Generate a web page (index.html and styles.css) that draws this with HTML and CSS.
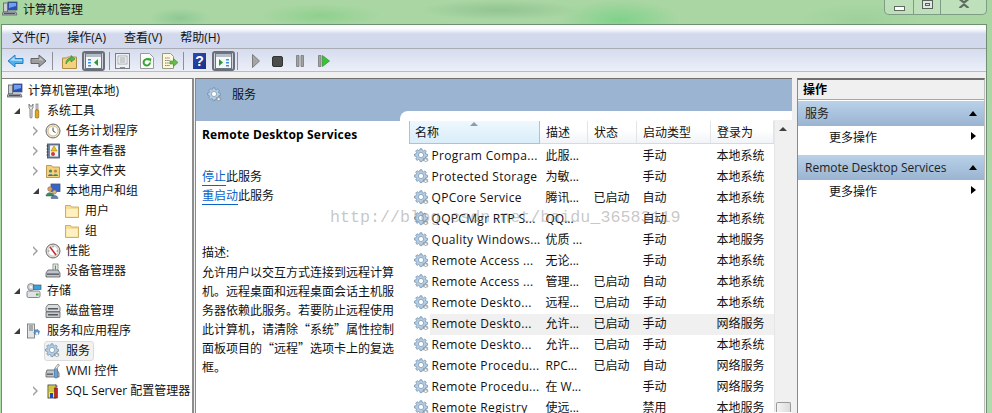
FILE: index.html
```html
<!DOCTYPE html>
<html lang="zh">
<head>
<meta charset="utf-8">
<title>计算机管理</title>
<link rel="stylesheet" href="styles.css">
</head>
<body>
<svg class="defs" width="0" height="0">
  <defs>
    <symbol id="gear" viewBox="0 0 16 16">
      <path d="M6 .8h2l.3 1.600 1.200.5 1.400-.9 1.400 1.400-.9 1.400.5 1.200 1.600.3v2l-1.600.3-.5 1.200.9 1.400-1.400 1.400-1.400-.9-1.200.5L8 13.600H6l-.3-1.600-1.200-.5-1.400.9-1.400-1.400.9-1.400-.5-1.200L.5 8V6l1.600-.3.5-1.200-.9-1.400 1.400-1.400 1.400.9 1.200-.5z" fill="#b4cde4" stroke="#6f8ca8" stroke-width=".7"/>
      <circle cx="7" cy="7" r="2.600" fill="#fff" stroke="#7d99b5" stroke-width=".8"/>
      <path d="M11.500 9.500l.8.100.3.8.8.100.5.7-.4.7.3.8-.6.6-.8-.2-.6.6-.8-.2-.6-.6-.8.100-.5-.7.4-.7-.3-.8.6-.6.8.2z" fill="#a8b2bc" stroke="#77818b" stroke-width=".5"/>
      <circle cx="11.700" cy="12.200" r="1" fill="#fff"/>
    </symbol>
    <symbol id="computer" viewBox="0 0 16 16">
      <rect x="6" y="1" width="9" height="8" fill="#2a4fc0" stroke="#44506a" stroke-width=".8"/>
      <path d="M7 2h7v3L7 7z" fill="#6fa0ee"/>
      <rect x="1.500" y="2" width="4" height="9" fill="#c9cdd2" stroke="#5b6068" stroke-width=".8"/>
      <path d="M1 11h13l1 3H0z" fill="#aab0b6" stroke="#55595f" stroke-width=".7"/>
      <rect x="2" y="12" width="11" height="1" fill="#50545a"/>
    </symbol>
    <symbol id="tools" viewBox="0 0 16 16">
      <path d="M3 1v4l1 1v8a1 1 0 0 0 2 0V6l1-1V1L6 3H4z" fill="#e7e7e7" stroke="#6b6b6b" stroke-width=".8"/>
      <rect x="10" y="1" width="2" height="6" fill="#d5d5d5" stroke="#6b6b6b" stroke-width=".6"/>
      <rect x="9.300" y="7" width="3.400" height="8" rx="1" fill="#e3a71c" stroke="#8d6510" stroke-width=".7"/>
    </symbol>
    <symbol id="clock" viewBox="0 0 16 16">
      <circle cx="8" cy="8" r="7" fill="#efe6cc" stroke="#6c6c6c"/>
      <circle cx="8" cy="8" r="5" fill="#fff" stroke="#c1a86a" stroke-width=".7"/>
      <path d="M8 4.500V8l2.500 1.500" fill="none" stroke="#444" stroke-width="1"/>
    </symbol>
    <symbol id="book" viewBox="0 0 16 16">
      <rect x="2.500" y="1" width="12" height="14" fill="#7288a8" stroke="#3e4a60" stroke-width=".8"/>
      <rect x="5" y="2.500" width="8" height="11" fill="#f4f4ec"/>
      <path d="M9 3l3 5H6z" fill="#f2c41c" stroke="#8b7414" stroke-width=".5"/>
      <circle cx="8" cy="11" r="2" fill="#d03a3a"/>
      <path d="M1.500 3h2M1.500 6h2M1.500 9h2M1.500 12h2" stroke="#333" stroke-width=".9"/>
    </symbol>
    <symbol id="folder" viewBox="0 0 16 16">
      <path d="M1.500 2.500h5l1 1.500h7v10.500h-13z" fill="#f7dd95" stroke="#c9a65a" stroke-width=".9"/>
      <path d="M2.500 6h11v7.500h-11z" fill="#fdf1c4"/>
    </symbol>
    <symbol id="share" viewBox="0 0 16 16">
      <path d="M1.500 2.500h5l1 1.500h7v10.500h-13z" fill="#f3d27f" stroke="#b8934a" stroke-width=".9"/>
      <circle cx="5.500" cy="8" r="1.600" fill="#3f8a5a"/>
      <path d="M3 13c0-2.500 5-2.500 5 0z" fill="#3c6ea8"/>
      <circle cx="10.500" cy="8" r="1.600" fill="#c87f3a"/>
      <path d="M8 13c0-2.500 5-2.500 5 0z" fill="#3f8a5a"/>
    </symbol>
    <symbol id="users" viewBox="0 0 16 16">
      <rect x="6" y="1" width="9" height="7.500" fill="#3665c9" stroke="#485470" stroke-width=".8"/>
      <circle cx="5" cy="6" r="2.300" fill="#d9a066" stroke="#7b5a34" stroke-width=".5"/>
      <path d="M1 13c0-4.500 8-4.500 8 0z" fill="#3f8a5a" stroke="#2d5c40" stroke-width=".5"/>
      <circle cx="9.500" cy="9" r="2" fill="#e5b17b" stroke="#7b5a34" stroke-width=".5"/>
      <path d="M6 15.500c0-4 7-4 7 0z" fill="#5f7fb5" stroke="#3f557c" stroke-width=".5"/>
    </symbol>
    <symbol id="perf" viewBox="0 0 16 16">
      <circle cx="8" cy="8" r="7" fill="#e4e0d8" stroke="#6b6b6b"/>
      <circle cx="8" cy="8" r="5" fill="#fff" stroke="#b5b5b5" stroke-width=".6"/>
      <path d="M5 4l6 8" stroke="#c92b2b" stroke-width="1.500"/>
      <path d="M8 3v1.500M3 8h1.500M13 8h-1.500" stroke="#555" stroke-width=".7"/>
    </symbol>
    <symbol id="device" viewBox="0 0 16 16">
      <rect x="8" y="1" width="5" height="7" fill="#eef2e8" stroke="#6c7570" stroke-width=".7"/>
      <path d="M10.500 2.500v4" stroke="#4a9b4a" stroke-width="1.200"/>
      <path d="M3 7h10l2 3v4H1v-4z" fill="#bfc5cb" stroke="#565b60" stroke-width=".8"/>
      <rect x="2" y="10.500" width="12" height="1.300" fill="#4f5358"/>
    </symbol>
    <symbol id="storage" viewBox="0 0 16 16">
      <circle cx="5" cy="4" r="3.500" fill="#d0d4d8" stroke="#6a6e72" stroke-width=".7"/>
      <circle cx="5" cy="4" r="1" fill="#fff"/>
      <rect x="7.500" y="2" width="7.500" height="4.500" fill="#3ea0d8" stroke="#3c5c78" stroke-width=".7"/>
      <rect x="1" y="8" width="13" height="6.500" rx="1.500" fill="#dfe2e5" stroke="#6a6e72" stroke-width=".8"/>
      <rect x="10" y="10.500" width="2.500" height="2" fill="#4aa84a"/>
    </symbol>
    <symbol id="disk" viewBox="0 0 16 16">
      <path d="M3 1.500h10l2 3v4H1v-4z" fill="#d9dcdf" stroke="#5f6367" stroke-width=".8"/>
      <rect x="3" y="5" width="10" height="1.500" fill="#55595d"/>
      <path d="M1 9h14v5.500H1z" fill="#c7cbcf" stroke="#5f6367" stroke-width=".8"/>
      <rect x="3" y="11" width="10" height="1.500" fill="#55595d"/>
    </symbol>
    <symbol id="srvapp" viewBox="0 0 16 16">
      <rect x="1.500" y="1" width="7" height="14" fill="#e2e5e8" stroke="#6a6e72" stroke-width=".8"/>
      <path d="M3 3h4M3 5h4M3 7h4" stroke="#5b6268" stroke-width=".9"/>
      <path d="M11 6.500l1 .2.3 1 1 .2.300 1-.7.800.2 1-.8.700-1-.3-.8.6-1-.3-.4-.9-1-.2-.3-1 .7-.8-.2-1 .8-.7 1 .3z" fill="#5f9ad0" stroke="#3e6a94" stroke-width=".5"/>
      <circle cx="11" cy="10.500" r="1.200" fill="#fff"/>
    </symbol>
    <symbol id="wmi" viewBox="0 0 16 16">
      <path d="M2 7h10l2 3v4H1v-4z" fill="#c1c6cb" stroke="#565b60" stroke-width=".8"/>
      <rect x="2" y="10.500" width="6" height="1.300" fill="#4f5358"/>
      <rect x="9.500" y="5" width="3" height="10" rx="1.200" fill="#6aa3dc" stroke="#3d6a96" stroke-width=".6"/>
      <path d="M10 5l3-4 1.500 1-3 4" fill="#eee" stroke="#666" stroke-width=".6"/>
    </symbol>
    <symbol id="sql" viewBox="0 0 16 16">
      <rect x="3" y="2" width="8" height="13" fill="#f5e94a" stroke="#333" stroke-width=".8"/>
      <path d="M4.500 4h5M4.500 6h5M4.500 8h5" stroke="#333" stroke-width=".8" stroke-dasharray="1 1"/>
      <rect x="9.500" y="5" width="3" height="10" fill="#c8202c" stroke="#551015" stroke-width=".5"/>
      <rect x="5" y="10" width="3" height="5" fill="#2a47b8"/>
      <path d="M10 1l3 2-2 2z" fill="#777"/>
    </symbol>
  </defs>
</svg>

<header class="titlebar">
  <svg class="ic16 title-ic"><use href="#computer"/></svg>
  <span class="title-text">计算机管理</span>
  <div class="controls">
    <span class="ctl ctl-min"><i class="min-glyph"></i></span>
    <span class="ctl ctl-max"><i class="max-glyph"></i></span>
    <span class="ctl ctl-close"><svg width="12" height="9" viewBox="0 0 12 9"><path d="M1.500 0l4.500 3.500L10.500 0M1.500 9l4.500-3.500L10.500 9" fill="none" stroke="#5e6b60" stroke-width="2.200"/></svg></span>
  </div>
</header>

<div class="window">
  <nav class="menubar">
    <span class="menu-item">文件(F)</span>
    <span class="menu-item">操作(A)</span>
    <span class="menu-item">查看(V)</span>
    <span class="menu-item">帮助(H)</span>
  </nav>

  <div class="toolbar">
    <svg class="tb-ic tb-back" width="17" height="14" viewBox="0 0 17 14"><path d="M1 7l7-6v3.500h8v5H8V13z" fill="#4fb2ef" stroke="#2a7fc4"/><path d="M3 6.500l4.500-3.800v2.800h7.500V7z" fill="#b5e2fa"/></svg>
    <svg class="tb-ic tb-fwd" width="17" height="14" viewBox="0 0 17 14"><path d="M16 7L9 1v3.500H1v5h8V13z" fill="#9d9d9d" stroke="#646464"/><path d="M2 5.500h7.500V3l4 3.500z" fill="#c6c6c6"/></svg>
    <i class="tb-sep tb-sep-a"></i>
    <svg class="tb-ic tb-up" width="15" height="16" viewBox="0 0 15 16"><path d="M.5 5h4l1-1h9v11.500H.5z" fill="#f3d27f" stroke="#b08d44"/><path d="M4 11c0-4 2-6 5-6V2.500L13 6 9 9V7C7 7 5.500 8.500 4 11z" fill="#55b84a" stroke="#2e7f29" stroke-width=".6"/></svg>
    <span class="tb-toggle tb-toggle-a"><svg width="17" height="16" viewBox="0 0 17 16"><rect x=".5" y=".5" width="16" height="15" fill="#f6f7f9" stroke="#6c7683"/><rect x="1" y="1" width="15" height="3" fill="#b4bec9"/><path d="M3 6h3v1.500H3zM3 9h3v1.500H3zM3 12h3v1.500H3z" fill="#3f8fd8"/><path d="M13 6v7L9 9.500z" fill="#2b9a35"/></svg></span>
    <i class="tb-sep tb-sep-b"></i>
    <svg class="tb-ic tb-props" width="15" height="16" viewBox="0 0 15 16"><rect x=".5" y=".5" width="14" height="15" fill="#eef0f2" stroke="#7a7f85"/><rect x="3" y="3" width="9" height="8" fill="#fff" stroke="#8a9097" stroke-width=".7"/><path d="M4.500 5h6M4.500 7h6M4.500 9h6" stroke="#7a8088" stroke-width=".8"/><rect x="5" y="14" width="5" height="1" fill="#3fa7e0"/></svg>
    <svg class="tb-ic tb-refresh" width="14" height="16" viewBox="0 0 14 16"><path d="M.5.500h9l4 4v11H.5z" fill="#fbfbfb" stroke="#9a9a9a"/><path d="M10 9.500a3.200 3.200 0 1 1-1-2.500" fill="none" stroke="#34a52f" stroke-width="2"/><path d="M7.500 5l4 .5-1 3.500z" fill="#34a52f"/></svg>
    <svg class="tb-ic tb-export" width="16" height="16" viewBox="0 0 16 16"><path d="M.5.500h8l3 3v12H.5z" fill="#fdf8dc" stroke="#9a9a80"/><path d="M3 5h5M3 7.500h5M3 10h5M3 12.500h5" stroke="#6f6f60" stroke-width=".9" stroke-dasharray="1.500 .7"/><path d="M8 8h3.500V5.500L16 9.500l-4.500 4V11H8z" fill="#66bd4a" stroke="#3f8c2c" stroke-width=".6"/></svg>
    <i class="tb-sep tb-sep-c"></i>
    <span class="tb-help">?</span>
    <span class="tb-toggle tb-toggle-b"><svg width="17" height="16" viewBox="0 0 17 16"><rect x=".5" y=".5" width="16" height="15" fill="#f6f7f9" stroke="#6c7683"/><rect x="1" y="1" width="15" height="3" fill="#b4bec9"/><path d="M11 6h3v1.500h-3zM11 9h3v1.500h-3zM11 12h3v1.500h-3z" fill="#3f8fd8"/><path d="M4 6v7l4-3.500z" fill="#2b9a35"/></svg></span>
    <i class="tb-sep tb-sep-d"></i>
    <svg class="tb-ic tb-play" width="8" height="14" viewBox="0 0 8 14"><path d="M.5.500L7.500 7 .5 13.500z" fill="#a5a5a5" stroke="#7d7d7d"/></svg>
    <svg class="tb-ic tb-stop" width="11" height="11" viewBox="0 0 11 11"><rect x=".5" y=".5" width="10" height="10" rx="1.500" fill="#4c4c4c" stroke="#333"/></svg>
    <svg class="tb-ic tb-pause" width="8" height="12" viewBox="0 0 8 12"><path d="M.5.500h2.500v11H.5zM5 .500h2.500v11H5z" fill="#a2a2a2" stroke="#777" stroke-width=".8"/></svg>
    <svg class="tb-ic tb-resume" width="12" height="12" viewBox="0 0 12 12"><path d="M.5.500h2.500v11H.5z" fill="#a2a2a2" stroke="#777" stroke-width=".8"/><path d="M4.500.500L11.500 6l-7 5.500z" fill="#3ec03a" stroke="#2b8f28" stroke-width=".7"/></svg>
  </div>

  <div class="panes">
    <aside class="tree">
      <div class="node"><svg class="ic16 node-ic"><use href="#computer"/></svg><span>计算机管理(本地)</span></div>
      <div class="node l1"><i class="tw open"></i><svg class="ic16 node-ic"><use href="#tools"/></svg><span>系统工具</span></div>
      <div class="node l2"><i class="tw closed"></i><svg class="ic16 node-ic"><use href="#clock"/></svg><span>任务计划程序</span></div>
      <div class="node l2"><i class="tw closed"></i><svg class="ic16 node-ic"><use href="#book"/></svg><span>事件查看器</span></div>
      <div class="node l2"><i class="tw closed"></i><svg class="ic16 node-ic"><use href="#share"/></svg><span>共享文件夹</span></div>
      <div class="node l2"><i class="tw open"></i><svg class="ic16 node-ic"><use href="#users"/></svg><span>本地用户和组</span></div>
      <div class="node l3"><svg class="ic16 node-ic"><use href="#folder"/></svg><span>用户</span></div>
      <div class="node l3"><svg class="ic16 node-ic"><use href="#folder"/></svg><span>组</span></div>
      <div class="node l2"><i class="tw closed"></i><svg class="ic16 node-ic"><use href="#perf"/></svg><span>性能</span></div>
      <div class="node l2"><i class="tw none"></i><svg class="ic16 node-ic"><use href="#device"/></svg><span>设备管理器</span></div>
      <div class="node l1"><i class="tw open"></i><svg class="ic16 node-ic"><use href="#storage"/></svg><span>存储</span></div>
      <div class="node l2"><i class="tw none"></i><svg class="ic16 node-ic"><use href="#disk"/></svg><span>磁盘管理</span></div>
      <div class="node l1"><i class="tw open"></i><svg class="ic16 node-ic"><use href="#srvapp"/></svg><span>服务和应用程序</span></div>
      <div class="node l2"><i class="tw none"></i><div class="selected"><svg class="ic16 node-ic"><use href="#gear"/></svg><span>服务</span></div></div>
      <div class="node l2"><i class="tw none"></i><svg class="ic16 node-ic"><use href="#wmi"/></svg><span>WMI 控件</span></div>
      <div class="node l2"><i class="tw closed"></i><svg class="ic16 node-ic"><use href="#sql"/></svg><span>SQL Server 配置管理器</span></div>
    </aside>

    <main class="center">
      <div class="center-head">
        <svg class="ic16 head-ic"><use href="#gear"/></svg>
        <span>服务</span>
      </div>
      <div class="center-body">
        <section class="detail">
          <h1 class="detail-title">Remote Desktop Services</h1>
          <p class="links"><a class="lnk">停止</a>此服务<br><a class="lnk">重启动</a>此服务</p>
          <p class="desc-label">描述:</p>
          <p class="desc">允许用户以交互方式连接到远程计算机。远程桌面和远程桌面会话主机服务器依赖此服务。若要防止远程使用此计算机，请清除“系统”属性控制面板项目的“远程”选项卡上的复选框。</p>
        </section>
        <section class="list">
          <div class="list-inner">
            <table class="svc">
              <colgroup><col class="c-name"><col class="c-desc"><col class="c-stat"><col class="c-start"><col class="c-log"></colgroup>
              <thead>
                <tr><th class="sorted"><i class="sort"></i>名称</th><th>描述</th><th>状态</th><th>启动类型</th><th>登录为</th></tr>
              </thead>
              <tbody>
                <tr><td class="nm"><svg class="ic16"><use href="#gear"/></svg>Program Compa...</td><td>此服...</td><td></td><td>手动</td><td>本地系统</td></tr>
                <tr><td class="nm"><svg class="ic16"><use href="#gear"/></svg>Protected Storage</td><td>为敏...</td><td></td><td>手动</td><td>本地系统</td></tr>
                <tr><td class="nm"><svg class="ic16"><use href="#gear"/></svg>QPCore Service</td><td>腾讯...</td><td>已启动</td><td>自动</td><td>本地系统</td></tr>
                <tr><td class="nm"><svg class="ic16"><use href="#gear"/></svg>QQPCMgr RTP S...</td><td>QQ...</td><td></td><td>自动</td><td>本地系统</td></tr>
                <tr><td class="nm"><svg class="ic16"><use href="#gear"/></svg>Quality Windows...</td><td>优质 ...</td><td></td><td>手动</td><td>本地服务</td></tr>
                <tr><td class="nm"><svg class="ic16"><use href="#gear"/></svg>Remote Access ...</td><td>无论...</td><td></td><td>手动</td><td>本地系统</td></tr>
                <tr><td class="nm"><svg class="ic16"><use href="#gear"/></svg>Remote Access ...</td><td>管理...</td><td>已启动</td><td>自动</td><td>本地系统</td></tr>
                <tr><td class="nm"><svg class="ic16"><use href="#gear"/></svg>Remote Deskto...</td><td>远程...</td><td>已启动</td><td>手动</td><td>本地系统</td></tr>
                <tr class="hl"><td class="nm"><svg class="ic16"><use href="#gear"/></svg>Remote Deskto...</td><td>允许...</td><td>已启动</td><td>手动</td><td>网络服务</td></tr>
                <tr><td class="nm"><svg class="ic16"><use href="#gear"/></svg>Remote Deskto...</td><td>允许...</td><td>已启动</td><td>手动</td><td>本地系统</td></tr>
                <tr><td class="nm"><svg class="ic16"><use href="#gear"/></svg>Remote Procedu...</td><td>RPC...</td><td>已启动</td><td>自动</td><td>网络服务</td></tr>
                <tr><td class="nm"><svg class="ic16"><use href="#gear"/></svg>Remote Procedu...</td><td>在 W...</td><td></td><td>手动</td><td>网络服务</td></tr>
                <tr><td class="nm"><svg class="ic16"><use href="#gear"/></svg>Remote Registry</td><td>使远...</td><td></td><td>禁用</td><td>本地服务</td></tr>
              </tbody>
            </table>
            <div class="scrollbar"><i class="sb-up"></i><i class="sb-thumb"></i></div>
          </div>
        </section>
      </div>
    </main>

    <aside class="actions">
      <div class="act-title">操作</div>
      <div class="act-head">服务<i class="up"></i></div>
      <div class="act-row">更多操作<i class="right"></i></div>
      <div class="act-head act-head-2">Remote Desktop Services<i class="up"></i></div>
      <div class="act-row">更多操作<i class="right"></i></div>
    </aside>
  </div>
</div>
<div class="watermark">http://blog.csdn.net/baidu_36583119</div>
</body>
</html>
```
FILE: styles.css
```css
* { box-sizing: border-box; }
html, body { margin: 0; padding: 0; height: 413px; overflow: hidden; }
body {
  position: relative;
  font: 12px/20px "Open Sans", "Noto Sans CJK SC", sans-serif;
  color: #111;
  background:
    radial-gradient(ellipse 60px 12px at 320px 16px, #8fd08e, transparent),
    radial-gradient(ellipse 30px 10px at 180px 18px, #8ec893, transparent),
    radial-gradient(ellipse 80px 10px at 500px 10px, #92c492, transparent),
    radial-gradient(ellipse 60px 20px at 620px 20px, #7fd28a, transparent),
    radial-gradient(ellipse 60px 16px at 860px 20px, #9ed09a, transparent),
    linear-gradient(#a9d6a3, #b1dbac);
}
.defs { position: absolute; }
.ic16 { width: 16px; height: 16px; flex: none; display: block; }

.titlebar { height: 24px; display: flex; align-items: center; padding-left: 2px; position: relative; }
.title-ic { margin-top: -6px; }
.title-text { margin-left: 5px; margin-top: -4px; color: #111; }
.controls {
  position: absolute; right: 5px; top: -1px; display: flex; height: 16px;
  border: 1px solid #7f9c84; border-top: 0; border-radius: 0 0 5px 5px;
  background: rgba(255,255,255,.25);
}
.ctl { display: flex; justify-content: center; align-items: center; border-left: 1px solid #7f9c84; }
.ctl-min { width: 28px; border-left: 0; }
.ctl-max { width: 27px; }
.ctl-close { width: 46px; padding-bottom: 6px; }
.min-glyph { width: 11px; height: 5px; margin-top: 4px; background: #fff; border: 1px solid #5e6b60; }
.max-glyph { width: 11px; height: 9px; margin-top: -5px; border: 1px solid #56625a; background: #dfe9df; box-shadow: inset 0 0 0 2px #dfe9df, inset 0 0 0 3px #56625a; }

.window {
  width: 986px; height: 389px; margin-left: 1px;
  border: 1px solid #6f8f74; border-bottom: 0;
  background: #f0f0f0;
  display: flex; flex-direction: column; overflow: hidden;
}
.menubar {
  height: 24px; display: flex; padding-left: 7px; align-items: center;
  background: linear-gradient(#fbfcfe, #fbfcfe 4px, #d3d9ec 9px, #d3d9ec);
  border-bottom: 1px solid #a9acb3;
}
.menu-item { margin-right: 12px; padding: 2px 3px 0; }

.toolbar {
  height: 23px; display: flex; align-items: center;
  background: linear-gradient(#d6dcee, #eceff8);
  border-bottom: 1px solid #b9bcc4;
  padding: 2px 0 0 5px;
}
.tb-ic { flex: none; display: block; }
.tb-fwd { margin-left: 6px; }
.tb-sep { width: 1px; height: 18px; background: #8d9095; flex: none; }
.tb-sep-a { margin-left: 5px; }
.tb-up { margin-left: 9px; }
.tb-toggle {
  width: 23px; height: 20px; display: flex; align-items: center; justify-content: center; flex: none;
  border: 2px solid #6c6f76; border-radius: 3px; background: #cfd3de;
}
.tb-toggle-a { margin-left: 5px; }
.tb-sep-b { margin-left: 4px; }
.tb-props { margin-left: 5px; }
.tb-refresh { margin-left: 10px; }
.tb-export { margin-left: 8px; }
.tb-sep-c { margin-left: 5px; }
.tb-help {
  margin-left: 9px; width: 13px; height: 16px; background: linear-gradient(135deg, #2c4cb0, #183188);
  color: #fff; font: bold 14px/16px "Liberation Sans", sans-serif; text-align: center; flex: none;
}
.tb-toggle-b { margin-left: 6px; }
.tb-sep-d { margin-left: 2px; }
.tb-play { margin-left: 14px; }
.tb-stop { margin-left: 12px; }
.tb-pause { margin-left: 13px; }
.tb-resume { margin-left: 14px; }

.panes { flex: 1; display: flex; padding: 6px 1px 0 0; min-height: 0; }
.tree {
  width: 192px; flex: none; background: #fff; overflow: hidden;
  border-top: 1px solid #7f7f7f; border-right: 2px solid #8d8d8d;
  padding-top: 2px;
}
.node { height: 20px; display: flex; align-items: center; padding-left: 5px; white-space: nowrap; }
.node-ic { margin-right: 5px; }
.l1 { padding-left: 9px; }
.l2 { padding-left: 28px; }
.l3 { padding-left: 62px; }
.l1 .tw, .l2 .tw { width: 12px; flex: none; position: relative; height: 10px; display: block; margin-right: 3px; }
.tw.open::before {
  content: ""; position: absolute; left: 3px; top: 2px; width: 0; height: 0;
  border-style: solid; border-width: 0 0 6px 6px; border-color: transparent transparent #3c3c3c transparent;
}
.tw.closed::before {
  content: ""; position: absolute; left: 3px; top: 0; width: 0; height: 0;
  border-style: solid; border-width: 5px 0 5px 5px; border-color: transparent transparent transparent #a0a0a0;
}
.tw.closed::after {
  content: ""; position: absolute; left: 3px; top: 1.500px; width: 0; height: 0;
  border-style: solid; border-width: 3.500px 0 3.500px 3.500px; border-color: transparent transparent transparent #fff;
}
.selected {
  display: flex; align-items: center; height: 20px; width: 50px; margin-left: -1px;
  background: #f2f2f2; border: 1px solid #dcdcdc; border-radius: 3px;
}

.center {
  width: 597px; flex: none; margin-left: 1px; background: #fff; display: flex; flex-direction: column;
  border-top: 1px solid #6f6f6f; border-left: 1px solid #8a8a8a;
}
.center-head {
  height: 32px; flex: none; display: flex; align-items: center; background: #9ab4d1; padding-left: 11px;
}
.head-ic { margin-right: 9px; }
.center-body { flex: 1; display: flex; min-height: 0; }
.detail { width: 204px; flex: none; }
.detail::before { content: ""; display: block; height: 10px; background: #9ab4d1; }
.detail-title { margin: 4px 0 0 6px; font-size: 12px; line-height: 20px; font-weight: 700; color: #000; white-space: nowrap; letter-spacing: .18px; }
.links { margin: 22px 0 0 6px; line-height: 19px; }
.lnk { color: #0a64c8; border-bottom: 1px solid #0a64c8; }
.desc-label { margin: 38px 0 0 6px; line-height: 20px; }
.desc { margin: -1px 0 0 6px; width: 194px; line-height: 19px; word-break: break-all; font-family: "Noto Sans CJK SC", sans-serif; }

.list { flex: 1; background: #9ab4d1; min-width: 0; }
.list-inner { height: 100%; background: #fff; border-radius: 8px 0 0 0; padding: 10px 0 0 9px; display: flex; align-items: flex-start; overflow: hidden; }
.svc { width: 364px; border-collapse: collapse; table-layout: fixed; flex: none; }
.c-name { width: 130px; } .c-desc { width: 48px; } .c-stat { width: 49px; } .c-start { width: 74px; } .c-log { width: 63px; }
.svc th {
  height: 22px; padding: 2px 0 0 6px; line-height: 19px; text-align: left; font-weight: 400;
  background: linear-gradient(#fff, #fff 40%, #f1f3f6);
  border-right: 1px solid #e2e5e8; border-bottom: 1px solid #d5dbe2;
  position: relative;
}
.svc th.sorted { background: linear-gradient(#eef8fd, #d9edf9); border: 1px solid #93cbe8; border-top: 0; padding-left: 5px; }
.sort {
  position: absolute; left: 60px; top: 1px; width: 0; height: 0;
  border-style: solid; border-width: 0 4px 4px; border-color: transparent transparent #8a9cb0 transparent;
}
.svc tbody tr:first-child td { padding-top: 2px; height: 23px; }
.svc td { height: 21px; padding: 0 0 0 6px; white-space: nowrap; overflow: hidden; }
.svc td.nm { padding-left: 4px; display: flex; align-items: center; gap: 2px; letter-spacing: .32px; }
.hl td { background: #f0f0f0; }
.hl td.nm { background: linear-gradient(90deg, #fff 20px, #f0f0f0 20px); }
.scrollbar { width: 18px; height: 292px; background: #f0f0f0; border-left: 1px solid #e6e6e6; position: relative; margin-top: -1px; flex: none; }
.sb-up {
  position: absolute; left: 4px; top: 7px; width: 0; height: 0;
  border-style: solid; border-width: 0 4px 4px; border-color: transparent transparent #3f3f3f transparent;
}
.sb-thumb {
  position: absolute; left: 1px; top: 282px; width: 15px; height: 10px;
  background: linear-gradient(90deg, #f4f4f4, #dcdcdc); border: 1px solid #9a9a9a; border-bottom: 0; border-radius: 2px 2px 0 0;
}

.actions {
  width: 188px; flex: none; margin-left: 5px; background: #fff;
  border-top: 2px solid #6f6f6f; border-left: 1px solid #8a8a8a; border-right: 1px solid #bdbdbd;
}
.act-title { height: 20px; background: #f0f0f0; font-weight: 700; padding-left: 5px; line-height: 20px; border-bottom: 1px solid #a6a6a6; margin-bottom: 1px; color: #000; }
.act-head {
  height: 25px; line-height: 26px; padding-left: 7px; position: relative; color: #222;
  background: linear-gradient(#b9d1e9, #9ab4d1);
}
.act-head-2 { margin-top: 7px; }
.up {
  position: absolute; right: 7px; top: 10px; width: 0; height: 0;
  border-style: solid; border-width: 0 4.500px 5px; border-color: transparent transparent #000 transparent;
}
.act-row { height: 22px; line-height: 24px; padding-left: 31px; position: relative; }
.right {
  position: absolute; right: 8px; top: 6px; width: 0; height: 0;
  border-style: solid; border-width: 4.500px 0 4.500px 5px; border-color: transparent transparent transparent #000;
}
.watermark {
  position: absolute; left: 330px; top: 207px;
  font: 16.700px/22px "Liberation Mono", monospace; color: rgba(120,120,120,.42);
  white-space: nowrap; pointer-events: none;
}
```
